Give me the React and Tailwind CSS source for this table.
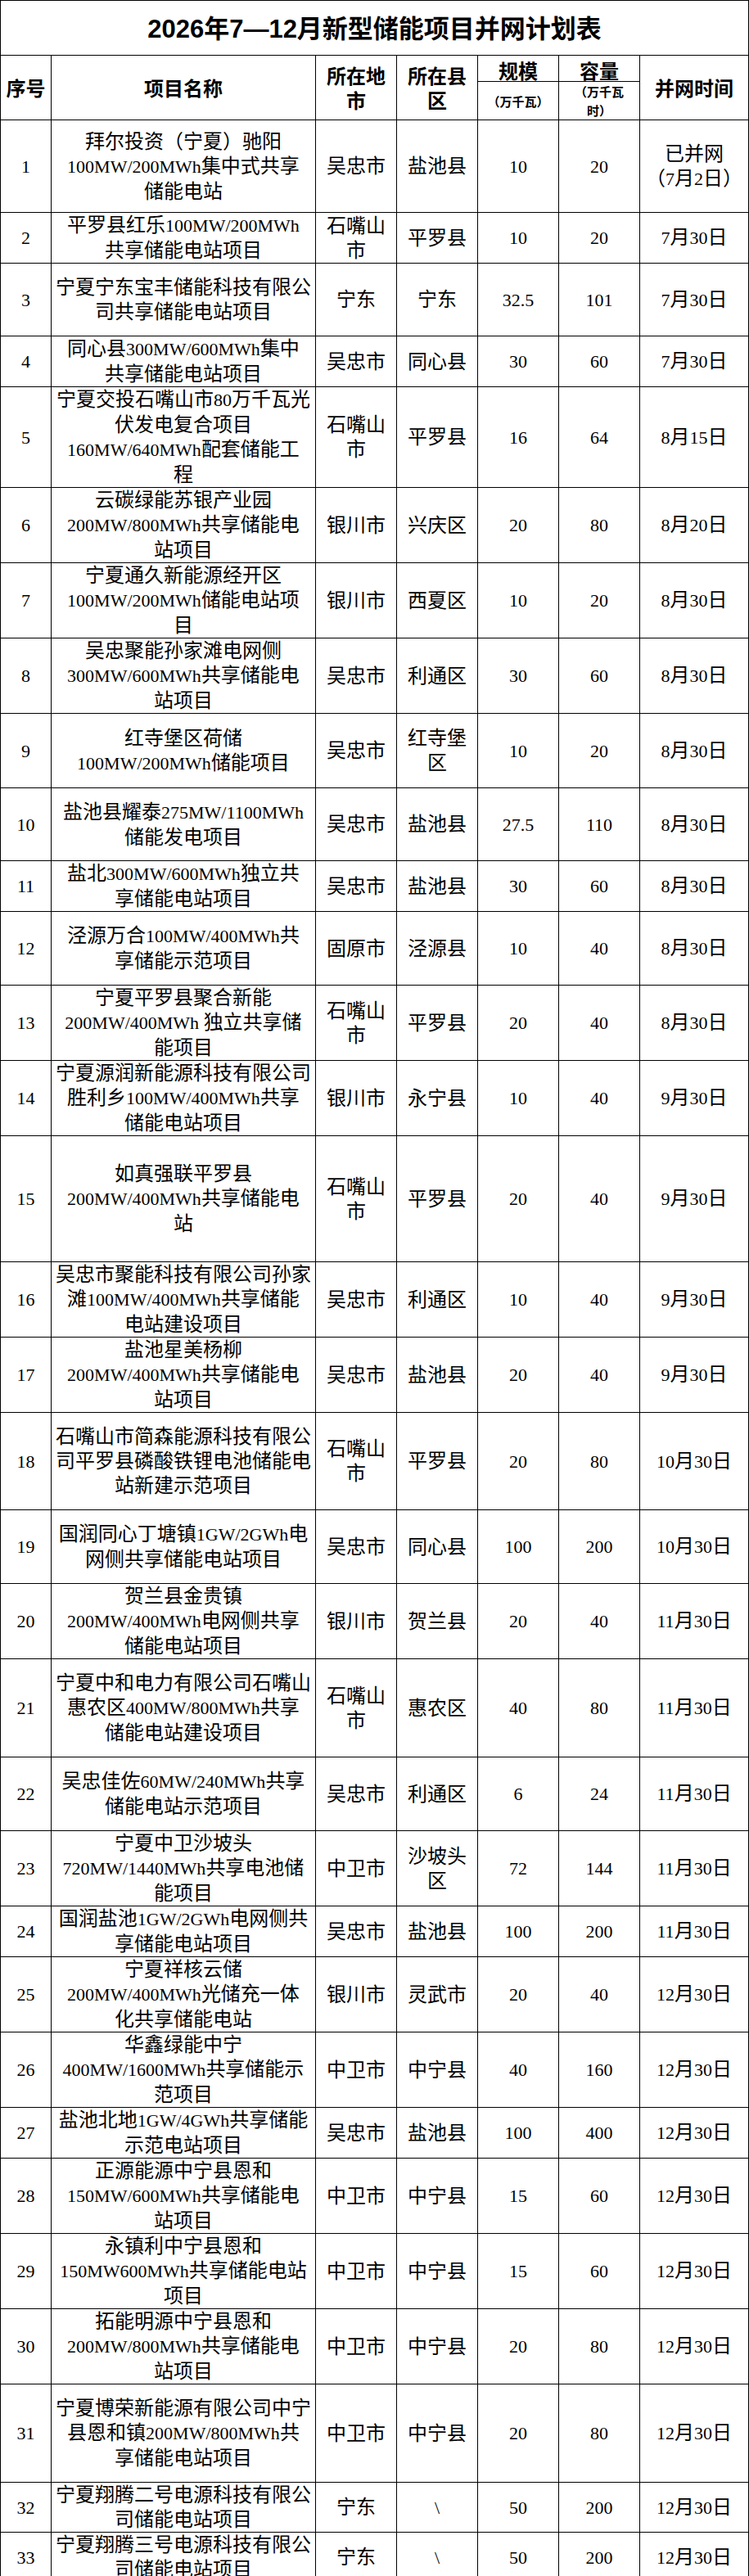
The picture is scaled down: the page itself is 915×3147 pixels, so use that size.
import React from 'react';

// 每行：序号、项目名称、所在地市、所在县区、规模、容量、并网时间、行高（| 表示换行）
const rows = [
    ['1', '拜尔投资（宁夏）驰阳|100MW/200MWh集中式共享|储能电站', '吴忠市', '盐池县', '10', '20', '已并网|（7月2日）', 'h-[113px]'],
    ['2', '平罗县红乐100MW/200MWh|共享储能电站项目', '石嘴山|市', '平罗县', '10', '20', '7月30日', 'h-[60px]'],
    ['3', '宁夏宁东宝丰储能科技有限公|司共享储能电站项目', '宁东', '宁东', '32.5', '101', '7月30日', 'h-[89px]'],
    ['4', '同心县300MW/600MWh集中|共享储能电站项目', '吴忠市', '同心县', '30', '60', '7月30日', 'h-[60px]'],
    ['5', '宁夏交投石嘴山市80万千瓦光|伏发电复合项目|160MW/640MWh配套储能工|程', '石嘴山|市', '平罗县', '16', '64', '8月15日', 'h-[121px]'],
    ['6', '云碳绿能苏银产业园|200MW/800MWh共享储能电|站项目', '银川市', '兴庆区', '20', '80', '8月20日', 'h-[90px]'],
    ['7', '宁夏通久新能源经开区|100MW/200MWh储能电站项|目', '银川市', '西夏区', '10', '20', '8月30日', 'h-[90px]'],
    ['8', '吴忠聚能孙家滩电网侧|300MW/600MWh共享储能电|站项目', '吴忠市', '利通区', '30', '60', '8月30日', 'h-[90px]'],
    ['9', '红寺堡区荷储|100MW/200MWh储能项目', '吴忠市', '红寺堡|区', '10', '20', '8月30日', 'h-[91px]'],
    ['10', '盐池县耀泰275MW/1100MWh|储能发电项目', '吴忠市', '盐池县', '27.5', '110', '8月30日', 'h-[89px]'],
    ['11', '盐北300MW/600MWh独立共|享储能电站项目', '吴忠市', '盐池县', '30', '60', '8月30日', 'h-[60px]'],
    ['12', '泾源万合100MW/400MWh共|享储能示范项目', '固原市', '泾源县', '10', '40', '8月30日', 'h-[90px]'],
    ['13', '宁夏平罗县聚合新能|200MW/400MWh 独立共享储|能项目', '石嘴山|市', '平罗县', '20', '40', '8月30日', 'h-[91px]'],
    ['14', '宁夏源润新能源科技有限公司|胜利乡100MW/400MWh共享|储能电站项目', '银川市', '永宁县', '10', '40', '9月30日', 'h-[89px]'],
    ['15', '如真强联平罗县|200MW/400MWh共享储能电|站', '石嘴山|市', '平罗县', '20', '40', '9月30日', 'h-[154px]'],
    ['16', '吴忠市聚能科技有限公司孙家|滩100MW/400MWh共享储能|电站建设项目', '吴忠市', '利通区', '10', '40', '9月30日', 'h-[90px]'],
    ['17', '盐池星美杨柳|200MW/400MWh共享储能电|站项目', '吴忠市', '盐池县', '20', '40', '9月30日', 'h-[90px]'],
    ['18', '石嘴山市简森能源科技有限公|司平罗县磷酸铁锂电池储能电|站新建示范项目', '石嘴山|市', '平罗县', '20', '80', '10月30日', 'h-[119px]'],
    ['19', '国润同心丁塘镇1GW/2GWh电|网侧共享储能电站项目', '吴忠市', '同心县', '100', '200', '10月30日', 'h-[90px]'],
    ['20', '贺兰县金贵镇|200MW/400MWh电网侧共享|储能电站项目', '银川市', '贺兰县', '20', '40', '11月30日', 'h-[90px]'],
    ['21', '宁夏中和电力有限公司石嘴山|惠农区400MW/800MWh共享|储能电站建设项目', '石嘴山|市', '惠农区', '40', '80', '11月30日', 'h-[120px]'],
    ['22', '吴忠佳佐60MW/240MWh共享|储能电站示范项目', '吴忠市', '利通区', '6', '24', '11月30日', 'h-[90px]'],
    ['23', '宁夏中卫沙坡头|720MW/1440MWh共享电池储|能项目', '中卫市', '沙坡头|区', '72', '144', '11月30日', 'h-[90px]'],
    ['24', '国润盐池1GW/2GWh电网侧共|享储能电站项目', '吴忠市', '盐池县', '100', '200', '11月30日', 'h-[60px]'],
    ['25', '宁夏祥核云储|200MW/400MWh光储充一体|化共享储能电站', '银川市', '灵武市', '20', '40', '12月30日', 'h-[90px]'],
    ['26', '华鑫绿能中宁|400MW/1600MWh共享储能示|范项目', '中卫市', '中宁县', '40', '160', '12月30日', 'h-[90px]'],
    ['27', '盐池北地1GW/4GWh共享储能|示范电站项目', '吴忠市', '盐池县', '100', '400', '12月30日', 'h-[60px]'],
    ['28', '正源能源中宁县恩和|150MW/600MWh共享储能电|站项目', '中卫市', '中宁县', '15', '60', '12月30日', 'h-[90px]'],
    ['29', '永镇利中宁县恩和|150MW600MWh共享储能电站|项目', '中卫市', '中宁县', '15', '60', '12月30日', 'h-[90px]'],
    ['30', '拓能明源中宁县恩和|200MW/800MWh共享储能电|站项目', '中卫市', '中宁县', '20', '80', '12月30日', 'h-[90px]'],
    ['31', '宁夏博荣新能源有限公司中宁|县恩和镇200MW/800MWh共|享储能电站项目', '中卫市', '中宁县', '20', '80', '12月30日', 'h-[120px]'],
    ['32', '宁夏翔腾二号电源科技有限公|司储能电站项目', '宁东', '\\', '50', '200', '12月30日', 'h-[59px]'],
    ['33', '宁夏翔腾三号电源科技有限公|司储能电站项目', '宁东', '\\', '50', '200', '12月30日', 'h-[59px]'],
];

// 西文和数字用小一号的 Times 字形
function Mixed({ text }) {
    const parts = text.split(/([\x00-\x7F]+)/).filter(Boolean);
    return parts.map((p, i) =>
        /^[\x00-\x7F]+$/.test(p) ? <span key={i} className="text-[22px]">{p}</span> : <React.Fragment key={i}>{p}</React.Fragment>
    );
}

function Lines({ text }) {
    const lines = text.split('|');
    return lines.map((line, i) => (
        <React.Fragment key={i}>
            {i > 0 && <br />}
            <Mixed text={line} />
        </React.Fragment>
    ));
}

const cell = 'border border-black p-0 text-center align-middle whitespace-nowrap';

export default function App() {
    return (
        <div className="bg-white text-black font-['Liberation_Serif','Noto_Sans_CJK_SC',serif] text-[24px] leading-[30px]">
            <table className="table-fixed border-collapse w-[914px]">
                <colgroup>
                    <col className="w-[62px]" />
                    <col className="w-[323px]" />
                    <col className="w-[99px]" />
                    <col className="w-[99px]" />
                    <col className="w-[99px]" />
                    <col className="w-[99px]" />
                    <col className="w-[133px]" />
                </colgroup>
                <thead>
                    <tr className="h-[67px]">
                        <td colSpan={7} className={`${cell} font-['Liberation_Sans','Noto_Sans_CJK_SC',sans-serif] text-[31px] font-bold leading-[40px] pt-1`}>
                            2026年7—12月新型储能项目并网计划表
                        </td>
                    </tr>
                    <tr className="h-[32px] font-['Noto_Sans_CJK_SC',sans-serif] font-bold">
                        <td rowSpan={2} className={cell}>序号</td>
                        <td rowSpan={2} className={cell}>项目名称</td>
                        <td rowSpan={2} className={cell}>所在地<br />市</td>
                        <td rowSpan={2} className={cell}>所在县<br />区</td>
                        <td className={`${cell} leading-[24px] pt-1`}>规模</td>
                        <td className={`${cell} leading-[24px] pt-1`}>容量</td>
                        <td rowSpan={2} className={cell}>并网时间</td>
                    </tr>
                    <tr className="h-[47px] font-['Noto_Sans_CJK_SC',sans-serif] font-bold text-[15px] leading-[23px]">
                        <td className={cell}>（万千瓦）</td>
                        <td className={cell}>（万千瓦<br />时）</td>
                    </tr>
                </thead>
                <tbody>
                    {rows.map(([no, name, city, county, scale, cap, time, h]) => (
                        <tr key={no} className={h}>
                            <td className={cell}><Mixed text={no} /></td>
                            <td className={cell}><Lines text={name} /></td>
                            <td className={cell}><Lines text={city} /></td>
                            <td className={cell}><Lines text={county} /></td>
                            <td className={cell}><Mixed text={scale} /></td>
                            <td className={cell}><Mixed text={cap} /></td>
                            <td className={cell}><Lines text={time} /></td>
                        </tr>
                    ))}
                </tbody>
            </table>
        </div>
    );
}
